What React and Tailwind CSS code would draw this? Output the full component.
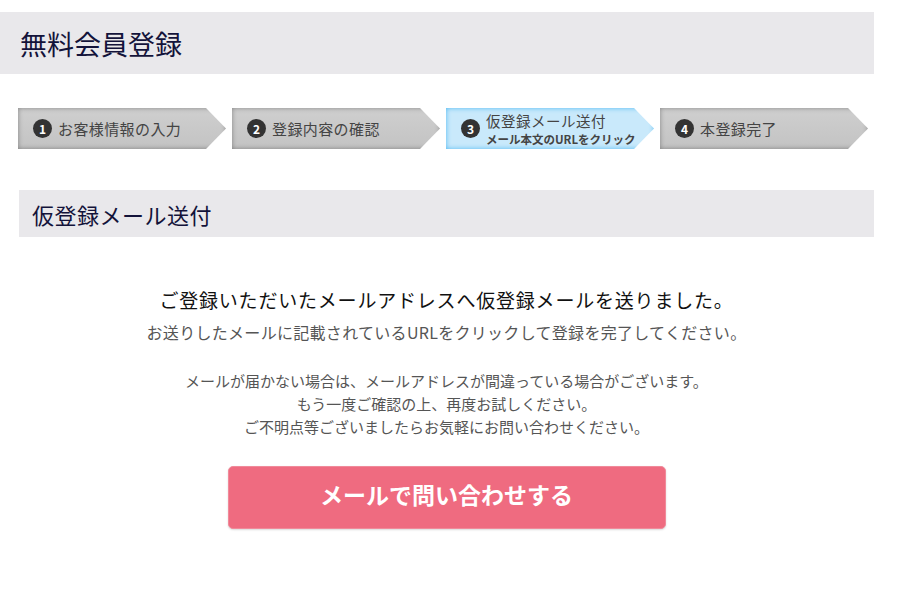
import React from "react";

const steps = [
    { num: "1", label: "お客様情報の入力" },
    { num: "2", label: "登録内容の確認" },
    { num: "3", label: "仮登録メール送付", sub: "メール本文のURLをクリック", active: true },
    { num: "4", label: "本登録完了" },
];

function Step({ num, label, sub, active }) {
    return (
        <div
            className={
                "relative flex items-center h-[41px] w-[208px] pl-[15px] [clip-path:polygon(0_0,188px_0,100%_50%,188px_100%,0_100%)] " +
                (active
                    ? "bg-[#c9e9fb] shadow-[inset_0_0_5px_#4fb9f2]"
                    : "bg-gradient-to-b from-[#cfcfcf] to-[#c3c3c3] shadow-[inset_0_0_5px_rgba(0,0,0,0.35)]")
            }
        >
            <span className="flex items-center justify-center w-[19px] h-[19px] rounded-full bg-[#333] text-white text-[12px] font-bold leading-none shrink-0">
                {num}
            </span>
            <div className="ml-[6px] flex flex-col">
                {sub ? (
                    <>
                        <span className="text-[14.5px] tracking-[0.5px] text-[#444] leading-[21px]">{label}</span>
                        <span className="text-[11.5px] font-bold text-[#444] leading-[16px]">{sub}</span>
                    </>
                ) : (
                    <span className="text-[15px] tracking-[0.4px] text-[#444] leading-[16px]">{label}</span>
                )}
            </div>
        </div>
    );
}

export default function App() {
    return (
        <div className="w-[905px] min-h-[591px] bg-white font-['Noto_Sans_CJK_JP','Noto_Sans',sans-serif]">
            <div className="w-[874px] pt-[12px]">
                {/* Page title */}
                <div className="h-[62px] bg-[#e9e8eb] flex items-center pl-[20px]">
                    <h1 className="text-[27px] text-[#13133a] leading-none">無料会員登録</h1>
                </div>

                {/* Steps */}
                <div className="flex gap-[6px] pl-[18px] mt-[34px]">
                    {steps.map((s) => (
                        <Step key={s.num} {...s} />
                    ))}
                </div>

                {/* Section title */}
                <div className="ml-[19px] mt-[41px] h-[47px] bg-[#e9e8eb] flex items-center pl-[13px]">
                    <h2 className="text-[22px] tracking-[0.5px] text-[#13133a] leading-none">仮登録メール送付</h2>
                </div>

                <div className="ml-[19px] flex flex-col items-center text-center">
                    <p className="mt-[50px] text-[19px] tracking-[0.8px] text-[#111] leading-[26px]">
                        ご登録いただいたメールアドレスへ仮登録メールを送りました。
                    </p>
                    <p className="mt-[8px] text-[16px] tracking-[0.3px] text-[#555] leading-[23px]">
                        お送りしたメールに記載されているURLをクリックして登録を完了してください。
                    </p>
                    <p className="mt-[25px] text-[15px] text-[#555] leading-[23px]">
                        メールが届かない場合は、メールアドレスが間違っている場合がございます。
                        <br />
                        もう一度ご確認の上、再度お試しください。
                        <br />
                        ご不明点等ございましたらお気軽にお問い合わせください。
                    </p>
                    <button className="mt-[28px] w-[438px] h-[63px] pb-[7px] rounded-[5px] bg-[#ef6b80] border border-[#f08a9a] shadow-[0_1px_2px_rgba(0,0,0,0.15)] text-white text-[23px] font-bold">
                        メールで問い合わせする
                    </button>
                </div>
            </div>
        </div>
    );
}
